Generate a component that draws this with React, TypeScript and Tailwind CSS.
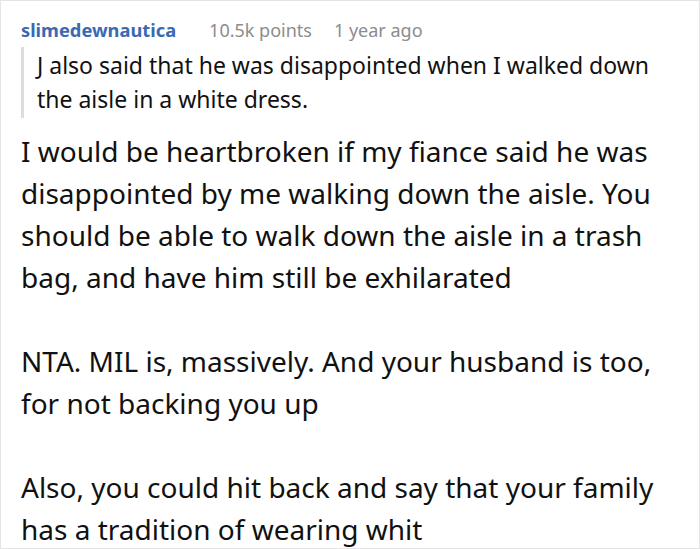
import React from 'react';

const paragraphs = [
  'I would be heartbroken if my fiance said he was disappointed by me walking down the aisle. You should be able to walk down the aisle in a trash bag, and have him still be exhilarated',
  'NTA. MIL is, massively. And your husband is too, for not backing you up',
  'Also, you could hit back and say that your family has a tradition of wearing whit',
];

export default function App() {
  return (
    <div
      className="h-[549px] w-[700px] overflow-hidden border border-[#e4e4e4] bg-white pl-[20px] pr-[28px] pt-[17px] text-[#111111]"
      style={{ fontFamily: '"Noto Sans", "Open Sans", sans-serif' }}
    >
      <div className="flex items-baseline whitespace-nowrap text-[18px] leading-[24px]">
        <span className="text-[18.3px] font-bold text-[#3a69b3]">slimedewnautica</span>
        <span className="ml-[33px] text-[#8c8c8c]">10.5k points</span>
        <span className="ml-[22px] text-[#8c8c8c]">1 year ago</span>
      </div>

      <blockquote className="mt-[5px] border-l-[3px] border-[#dddddd] py-[2px] pl-[13px] text-[23px] leading-[33.5px]">
        J also said that he was disappointed when I walked down the aisle in a white dress.
      </blockquote>

      <div className="mt-[12px] flex flex-col gap-[42px] text-[28px] leading-[42px]">
        {paragraphs.map(p => (
          <p key={p.slice(0, 12)}>{p}</p>
        ))}
      </div>
    </div>
  );
}
